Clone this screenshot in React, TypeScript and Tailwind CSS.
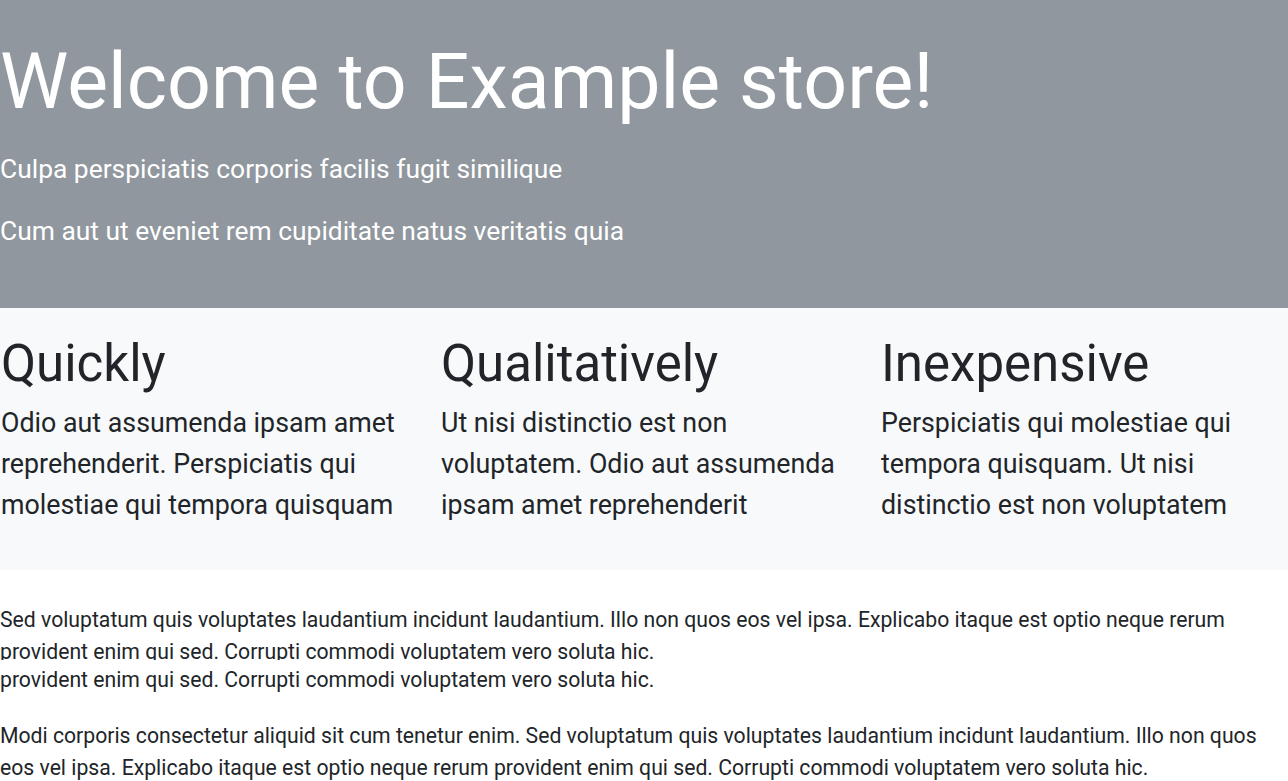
export default function App() {
  const features = [
    {
      title: "Quickly",
      text: "Odio aut assumenda ipsam amet reprehenderit. Perspiciatis qui molestiae qui tempora quisquam",
    },
    {
      title: "Qualitatively",
      text: "Ut nisi distinctio est non voluptatem. Odio aut assumenda ipsam amet reprehenderit",
    },
    {
      title: "Inexpensive",
      text: "Perspiciatis qui molestiae qui tempora quisquam. Ut nisi distinctio est non voluptatem",
    },
  ];

  return (
    <div className="min-h-screen overflow-hidden bg-white text-[#212529] font-['Roboto',sans-serif]">
      {/* Hero */}
      <section className="h-[308px] bg-[#90979e] text-white pt-[34px]">
        <h1 className="text-[77px] leading-[96px] font-normal">Welcome to Example store!</h1>
        <p className="text-[26.4px] leading-[36px] mt-[21px]">Culpa perspiciatis corporis facilis fugit similique</p>
        <p className="text-[26.4px] leading-[36px] mt-[26px]">Cum aut ut eveniet rem cupiditate natus veritatis quia</p>
      </section>

      {/* Features */}
      <section className="h-[262px] bg-[#f8f9fa] grid grid-cols-[440px_440px_440px] pt-[24px]">
        {features.map((f) => (
          <div key={f.title} className="pl-[1px] pr-[24px]">
            <h2 className="text-[51px] leading-[64px] font-normal">{f.title}</h2>
            <p className="text-[26.8px] leading-[41px] mt-[7px]">{f.text}</p>
          </div>
        ))}
      </section>

      {/* Text */}
      <section className="pt-[34px] text-[21.2px] leading-[32px]">
        <div className="h-[56px] overflow-hidden">
          <p>
            Sed voluptatum quis voluptates laudantium incidunt laudantium. Illo non quos eos vel ipsa. Explicabo itaque est optio neque rerum provident enim qui sed. Corrupti commodi voluptatem vero soluta hic.
          </p>
        </div>
        <p className="mt-[4px]">provident enim qui sed. Corrupti commodi voluptatem vero soluta hic.</p>
        <p className="mt-[24px]">
          Modi corporis consectetur aliquid sit cum tenetur enim. Sed voluptatum quis voluptates laudantium incidunt laudantium. Illo non quos eos vel ipsa. Explicabo itaque est optio neque rerum provident enim qui sed. Corrupti commodi voluptatem vero soluta hic.
        </p>
      </section>
    </div>
  );
}
